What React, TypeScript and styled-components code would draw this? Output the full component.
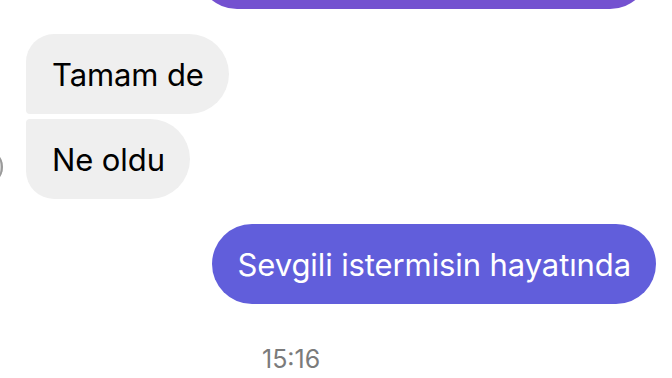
import React from 'react';
import styled, { createGlobalStyle } from 'styled-components';

const GlobalStyle = createGlobalStyle`
  html, body {
    margin: 0;
    padding: 0;
    background: #ffffff;
    overflow: hidden;
  }
  body {
    font-family: Inter, "Noto Sans", "Liberation Sans", sans-serif;
  }
`;

const Thread = styled.div`
  width: 672px;
  height: 378px;
  display: flex;
  flex-direction: column;
  overflow: hidden;
`;

const OutgoingRow = styled.div<{ $top?: boolean }>`
  display: flex;
  justify-content: flex-end;
  padding-right: ${props => (props.$top ? 22 : 16)}px;
  margin-top: ${props => (props.$top ? -71 : 25)}px;
`;

const Bubble = styled.div`
  height: 80px;
  box-sizing: border-box;
  display: flex;
  align-items: center;
  padding: 0 25px 0 26px;
  font-size: 31px;
  letter-spacing: -0.1px;
  white-space: nowrap;
`;

const OutgoingBubble = styled(Bubble)<{ $shade: string; $width?: number }>`
  background: ${props => props.$shade};
  color: #ffffff;
  border-radius: 40px;
  width: ${props => (props.$width ? `${props.$width}px` : 'auto')};
`;

type Corner = 'first' | 'last';

const IncomingBubble = styled(Bubble)<{ $corner: Corner }>`
  background: #efefef;
  color: #000000;
  border-radius: ${props =>
    props.$corner === 'first' ? '28px 40px 40px 4px' : '4px 40px 40px 28px'};
`;

const IncomingGroup = styled.div`
  display: flex;
  align-items: flex-end;
  margin-top: 25px;
`;

const Avatar = styled.div`
  width: 36px;
  height: 36px;
  margin-left: -33px;
  margin-right: 23px;
  margin-bottom: 14px;
  border-radius: 50%;
  background: #d6d6d6;
  box-shadow: inset -2px 0 0 #9a9a9a;
  flex-shrink: 0;
`;

const BubbleStack = styled.div`
  display: flex;
  flex-direction: column;
  align-items: flex-start;
  gap: 5px;
`;

const Timestamp = styled.div`
  margin-top: 40px;
  padding-left: 262px;
  font-size: 25px;
  color: #7b7b7b;
`;

const App = () => {
  return (
    <>
      <GlobalStyle />
      <Thread>
        <OutgoingRow $top>
          <OutgoingBubble $shade="#7451d0" $width={453} />
        </OutgoingRow>
        <IncomingGroup>
          <Avatar />
          <BubbleStack>
            <IncomingBubble $corner="first">Tamam de</IncomingBubble>
            <IncomingBubble $corner="last">Ne oldu</IncomingBubble>
          </BubbleStack>
        </IncomingGroup>
        <OutgoingRow>
          <OutgoingBubble $shade="#615edb">Sevgili istermisin hayatında</OutgoingBubble>
        </OutgoingRow>
        <Timestamp>15:16</Timestamp>
      </Thread>
    </>
  );
};

export default App;
